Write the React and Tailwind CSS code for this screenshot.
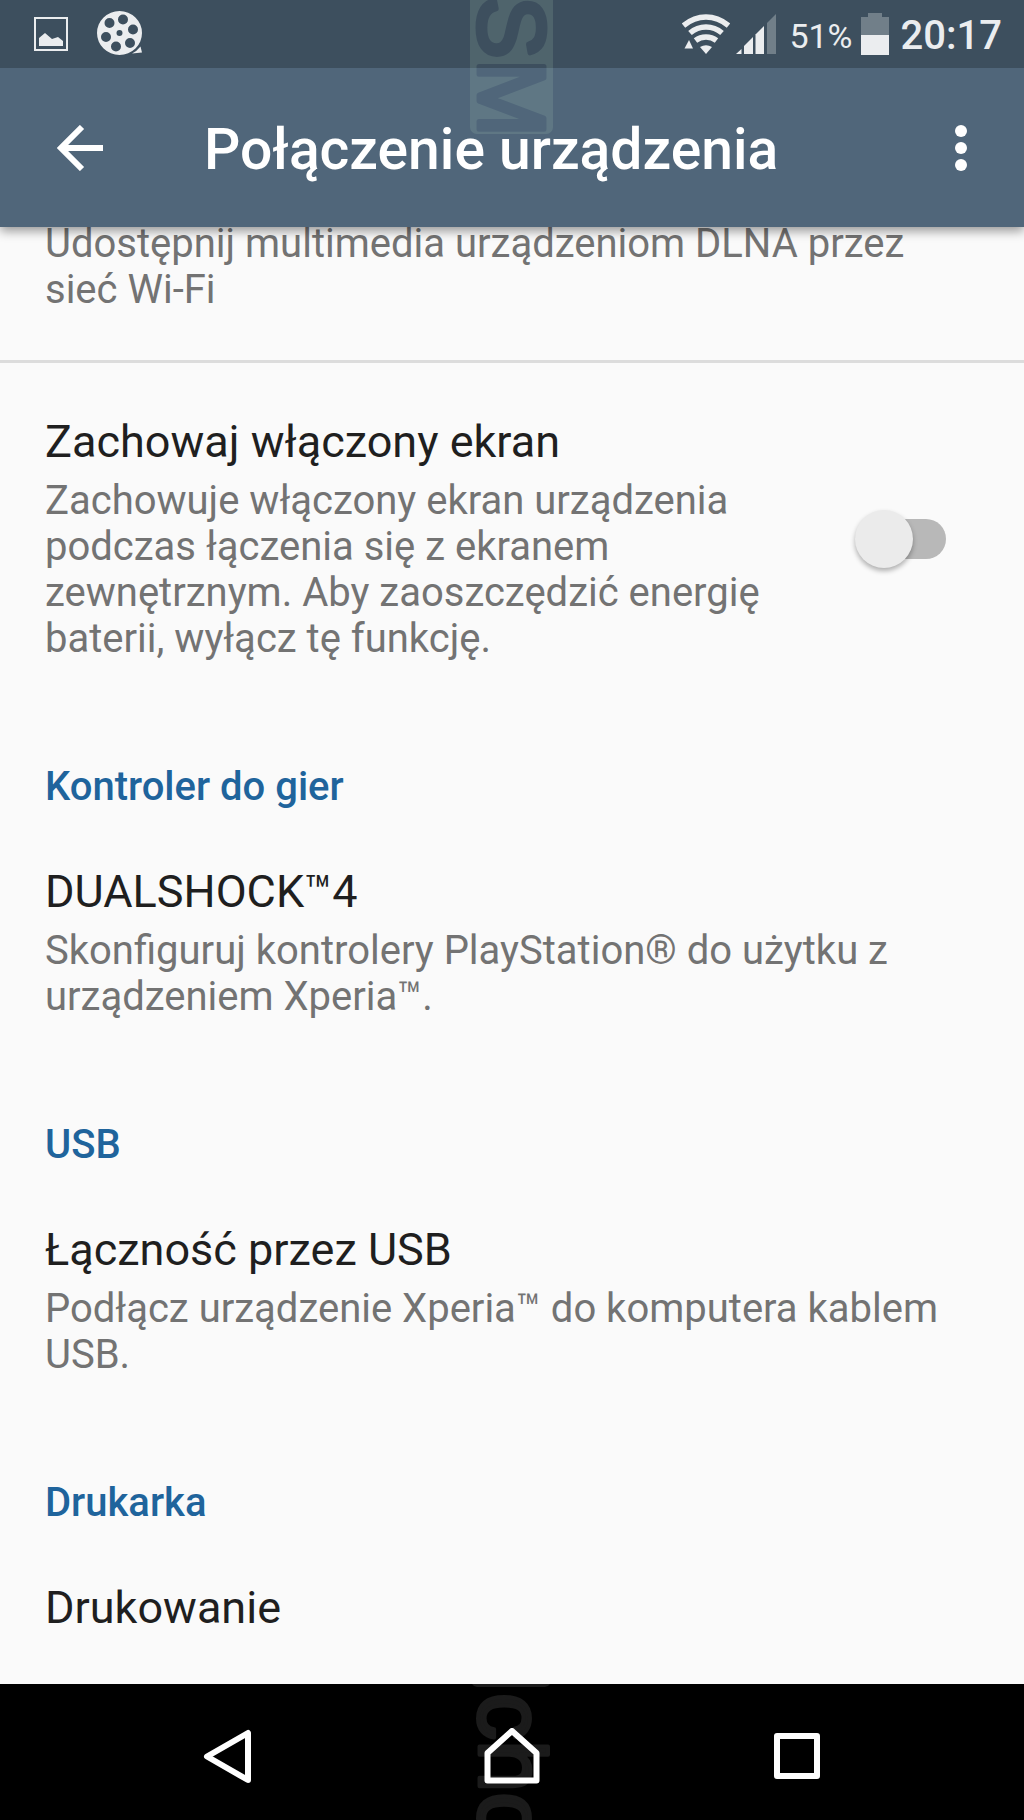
import { useState } from 'react'

const sections = [
  {
    heading: 'Kontroler do gier',
    items: [
      {
        title: 'DUALSHOCK™4',
        summary: 'Skonfiguruj kontrolery PlayStation® do użytku z urządzeniem Xperia™.',
      },
    ],
  },
  {
    heading: 'USB',
    items: [
      {
        title: 'Łączność przez USB',
        summary: 'Podłącz urządzenie Xperia™ do komputera kablem USB.',
      },
    ],
  },
  { heading: 'Drukarka', items: [{ title: 'Drukowanie' }] },
]

export default function App() {
  const [keepOn, setKeepOn] = useState(false)

  return (
    <div className="relative flex flex-col min-h-screen overflow-hidden bg-[#fafafa] font-['Roboto',sans-serif] text-[#1f1f1f]">
      <header className="relative z-10 bg-[#50667a] shadow-[0_4px_10px_rgba(0,0,0,0.4)]">
        <TopStamp />
        <StatusBar />
        <Toolbar />
      </header>

      {/* Settings list, scrolled a little under the toolbar */}
      <main className="flex-1 -mt-[6px]">
        <p className="px-[45px] pb-[47px] text-[40px] leading-[46px] text-[#737373] border-b-3 border-[#dcdcdc]">
          Udostępnij multimedia urządzeniom DLNA przez sieć Wi-Fi
        </p>

        <div className="flex items-center justify-between gap-8 pt-[52px] pb-[47px] pl-[45px] pr-[78px]">
          <label htmlFor="keep-on" className="flex-1">
            <ItemText
              title="Zachowaj włączony ekran"
              summary="Zachowuje włączony ekran urządzenia podczas łączenia się z ekranem zewnętrznym. Aby zaoszczędzić energię baterii, wyłącz tę funkcję."
            />
          </label>
          <input
            id="keep-on"
            type="checkbox"
            role="switch"
            checked={keepOn}
            onChange={(e) => setKeepOn(e.target.checked)}
            className="relative appearance-none shrink-0 w-20 h-10 rounded-full bg-[#b8b8b8] before:absolute before:-top-[9px] before:-left-[11px] before:size-[58px] before:rounded-full before:bg-[#ebebeb] before:shadow-[0_3px_5px_rgba(0,0,0,0.3)] before:transition-transform checked:bg-[#9cc0dc] checked:before:translate-x-11 checked:before:bg-[#1f649c]"
          />
        </div>

        {sections.map((section) => (
          <section key={section.heading}>
            <h2 className="px-[45px] pt-[55px] pb-[3px] text-[40px] leading-[46px] font-medium text-[#1f649c]">
              {section.heading}
            </h2>
            {section.items.map((item) => (
              <button key={item.title} className="block w-full px-[45px] pt-[52px] pb-[47px] text-left">
                <ItemText {...item} />
              </button>
            ))}
          </section>
        ))}
      </main>

      <NavBar />
    </div>
  )
}

function ItemText({ title, summary }) {
  return (
    <>
      <span className="block text-[45px] leading-[54px]">{title}</span>
      {summary && (
        <span className="block mt-[9px] text-[40px] leading-[46px] text-[#737373]">{summary}</span>
      )}
    </>
  )
}

function StatusBar() {
  return (
    <div className="flex items-center justify-between h-17 pl-[34px] pr-[22px] bg-[#3d4f5e] text-[#ebedef]">
      <div className="flex items-center gap-[29px]">
        <svg className="size-[34px]" viewBox="0 0 34 34" fill="none">
          <rect x="1" y="1" width="32" height="32" stroke="currentColor" strokeWidth="2" />
          <path d="M5 29V21L11 16L18 22L24 20L29 24V29Z" fill="currentColor" />
        </svg>
        <FilmReel />
      </div>
      <div className="flex items-center">
        <Wifi />
        <Signal />
        <span className="pt-1 ml-[13px] text-[34px] leading-[40px]">51%</span>
        <svg className="ml-2 w-7 h-[42px]" viewBox="0 0 28 42" fill="currentColor">
          <path d="M7 0H21V4H28V22H0V4H7Z" opacity="0.3" />
          <rect y="22" width="28" height="20" />
        </svg>
        <span className="pt-1 ml-3 text-[40px] leading-[46px] font-medium">20:17</span>
      </div>
    </div>
  )
}

function FilmReel() {
  return (
    <svg className="size-[46px]" viewBox="0 0 46 46" fill="currentColor">
      <path
        fillRule="evenodd"
        d="M22.500 0a22.500 22 0 1 0 0 44a22.500 22 0 1 0 0-44Z
          M26 3.500a5 5 0 1 1 0 10a5 5 0 1 1 0-10Z
          M36 13.500a5 5 0 1 1 0 10a5 5 0 1 1 0-10Z
          M33 27a5 5 0 1 1 0 10a5 5 0 1 1 0-10Z
          M19 30.500a5 5 0 1 1 0 10a5 5 0 1 1 0-10Z
          M9 21a5 5 0 1 1 0 10a5 5 0 1 1 0-10Z
          M12.500 7a5 5 0 1 1 0 10a5 5 0 1 1 0-10Z
          M22.500 19a3 3 0 1 1 0 6a3 3 0 1 1 0-6Z"
      />
      <path d="M35 42.500Q40 40 43.500 35.500L45 41.500Z" />
    </svg>
  )
}

function Wifi() {
  return (
    <svg className="w-12 h-10" viewBox="0 0 48 40" fill="none">
      <g stroke="currentColor" strokeWidth="5.500">
        <path d="M1.500 11.500Q12 3 24 3T46.500 11.500" />
        <path d="M8 19Q15 13 24 13T40 19" />
        <path d="M13.500 26.500Q18 23 24 23T34.500 26.500" />
      </g>
      <path d="M18 33Q24 29.500 30 33L24 40Z" fill="currentColor" />
      <path d="M2.500 34.500L7 26L11 34.500Z" fill="currentColor" />
    </svg>
  )
}

function Signal() {
  return (
    <svg className="ml-[6px] w-10 h-10" viewBox="0 0 40 40" fill="currentColor">
      <path d="M0 40L5.500 35V40Z" />
      <path d="M8 40V32L17 23V40Z" />
      <path d="M19.500 40V20.500L28 12V40Z" />
      <path d="M31 40V9L40 0V40Z" opacity="0.3" />
    </svg>
  )
}

function Toolbar() {
  return (
    <div className="relative z-20 flex items-center h-[159px] pl-[57px] pr-[55px] text-white">
      <button aria-label="Wstecz">
        <svg className="size-[46px]" viewBox="0 0 46 46" fill="none" stroke="currentColor" strokeWidth="6">
          <path d="M46 23H5M25 2L4 23L25 44" />
        </svg>
      </button>
      <h1 className="flex-1 pt-1 ml-[101px] text-[57px] leading-[68px] font-medium">Połączenie urządzenia</h1>
      <button aria-label="Więcej opcji">
        <svg className="w-4 h-[46px]" viewBox="0 0 16 46" fill="currentColor">
          <circle cx="8" cy="6" r="6" />
          <circle cx="8" cy="23" r="6" />
          <circle cx="8" cy="40" r="6" />
        </svg>
      </button>
    </div>
  )
}

// Faint sideways stamp with the letters cut out of a plate
function TopStamp() {
  return (
    <svg className="absolute top-0 left-[470px] z-10 w-[83px] h-[134px]" viewBox="0 0 83 134" aria-hidden="true">
      <mask id="stamp-letters">
        <rect y="-10" width="83" height="144" rx="7" fill="white" />
        <text
          transform="translate(9 -4) rotate(90)"
          fontSize="94"
          fill="black"
          stroke="black"
          strokeLinejoin="round"
          strokeWidth="5"
          className="font-['Liberation_Sans',sans-serif]"
        >
          SM
        </text>
      </mask>
      <rect width="83" height="134" fill="#b4dcbe" opacity="0.15" mask="url(#stamp-letters)" />
    </svg>
  )
}

function NavBar() {
  return (
    <nav className="relative flex items-center h-[136px] bg-black text-white">
      <svg className="absolute top-0 left-[472px] w-20 h-[136px]" viewBox="0 0 80 136" fill="#1b1b1b" aria-hidden="true">
        <path d="M0 0H78Q76 3 73 3H5Q2 3 0 0Z" />
        <text
          transform="translate(7 9) rotate(90)"
          fontSize="94"
          stroke="#1b1b1b"
          strokeLinejoin="round"
          strokeWidth="4"
          className="font-['Liberation_Sans',sans-serif]"
        >
          cho
        </text>
      </svg>
      <div className="relative flex flex-1 items-center justify-between px-[199px] pt-2">
        <button aria-label="Wstecz">
          <svg className="w-14 h-14" viewBox="0 0 56 56" fill="none" stroke="currentColor" strokeWidth="6" strokeLinejoin="round">
            <path d="M8 28.500L49 5V52Z" />
          </svg>
        </button>
        <button aria-label="Ekran główny">
          <svg className="w-14 h-14" viewBox="0 0 56 56" fill="none" stroke="currentColor" strokeWidth="6" strokeLinejoin="round">
            <path d="M28 3L52.500 25V52.500H3.500V25Z" />
          </svg>
        </button>
        <button aria-label="Ostatnie aplikacje">
          <svg className="w-14 h-14" viewBox="0 0 56 56" fill="none" stroke="currentColor" strokeWidth="6" strokeLinejoin="round">
            <rect x="8" y="8" width="40" height="40" />
          </svg>
        </button>
      </div>
    </nav>
  )
}
